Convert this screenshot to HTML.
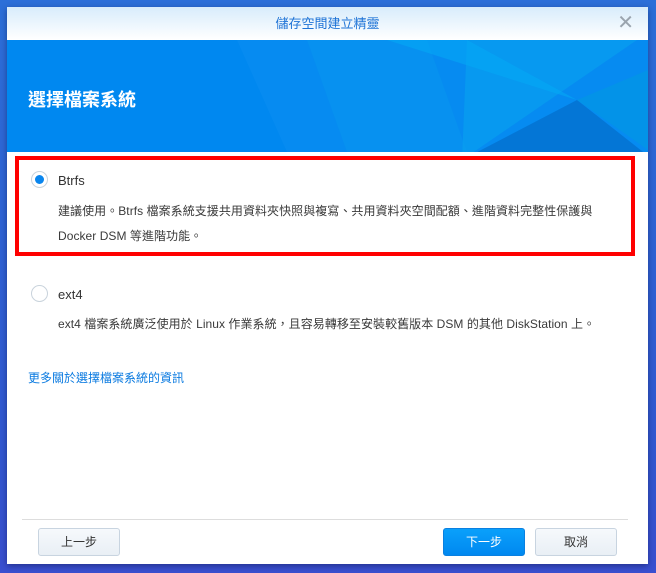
<!DOCTYPE html><html><head><meta charset="utf-8"><style>
*{margin:0;padding:0;box-sizing:border-box}
body{width:656px;height:573px;overflow:hidden;background:linear-gradient(180deg,#2c6fd8,#3257d0 80%,#3a4fd0);font-family:"Liberation Sans","Noto Sans CJK TC",sans-serif;position:relative}
.win{position:absolute;left:7px;top:7px;width:641px;height:557px;background:#fff;box-shadow:0 2px 6px rgba(0,0,40,.4)}
.title{height:33px;background:linear-gradient(#d8ecfb,#fff);text-align:center;line-height:33px;color:#1e73d6;font-size:13px}
.x{position:absolute;right:14px;top:6px;color:#9aa4ae;font-size:20px;line-height:20px}
.hdr{position:absolute;top:33px;left:0;width:641px;height:112px;background:#0088f0;overflow:hidden}
.hdr h1{position:absolute;left:21px;top:46px;color:#fff;font-size:18px;font-weight:bold}
.red{position:absolute;left:8px;top:149px;width:620px;height:100px;border:4px solid #f00}
.radio{position:absolute;width:17px;height:17px;border-radius:50%;border:1px solid #c9d3dc;background:#fff}
.radio.on::after{content:"";position:absolute;left:3px;top:3px;width:9px;height:9px;border-radius:50%;background:#0a86ee}
.t{position:absolute;font-size:13px;color:#333}
.d{position:absolute;font-size:12px;color:#3a3a3a;line-height:25px;letter-spacing:.05px}
.link{position:absolute;left:21px;top:362px;color:#0a7ae0;font-size:12px}
.line{position:absolute;left:15px;top:512px;width:606px;height:1px;background:#ddd}
.btn{position:absolute;top:521px;width:82px;height:28px;border:1px solid #c8d4e0;border-radius:3px;background:linear-gradient(#f6f9fc,#e9eff5);text-align:center;line-height:26px;font-size:12px;color:#333}
.btn.p{background:linear-gradient(#0aa0fb,#0088f0);border-color:#0a80e0;color:#fff}
</style></head><body>
<div class="win">
<div class="title">儲存空間建立精靈</div><div class="x">✕</div>
<div class="hdr">
<svg width="641" height="112" style="position:absolute;left:0;top:0">
<polygon points="230,0 641,0 641,112 280,112" fill="#0a8ef2" opacity=".6"/>
<polygon points="300,0 420,0 460,112 340,112" fill="#0797ef" opacity=".5"/>
<polygon points="460,0 630,0 455,120" fill="#08a0f0" opacity=".7"/>
<polygon points="455,120 570,60 640,115" fill="#0470d0" opacity=".8"/>
<polygon points="570,60 641,30 641,110" fill="#0393e8"/>
<polygon points="380,0 460,0 570,60" fill="#05a8f5" opacity=".6"/>
</svg>
<h1>選擇檔案系統</h1></div>
<div class="red"></div>
<div class="radio on" style="left:24px;top:164px"></div>
<div class="t" style="left:51px;top:166px">Btrfs</div>
<div class="d" style="left:51px;top:192px">建議使用。Btrfs 檔案系統支援共用資料夾快照與複寫、共用資料夾空間配額、進階資料完整性保護與<br>Docker DSM 等進階功能。</div>
<div class="radio" style="left:24px;top:278px"></div>
<div class="t" style="left:51px;top:280px">ext4</div>
<div class="d" style="left:51px;top:305px">ext4 檔案系統廣泛使用於 Linux 作業系統，且容易轉移至安裝較舊版本 DSM 的其他 DiskStation 上。</div>
<div class="link">更多關於選擇檔案系統的資訊</div>
<div class="line"></div>
<div class="btn" style="left:31px">上一步</div>
<div class="btn p" style="left:436px">下一步</div>
<div class="btn" style="left:528px">取消</div>
</div>
</body></html>
